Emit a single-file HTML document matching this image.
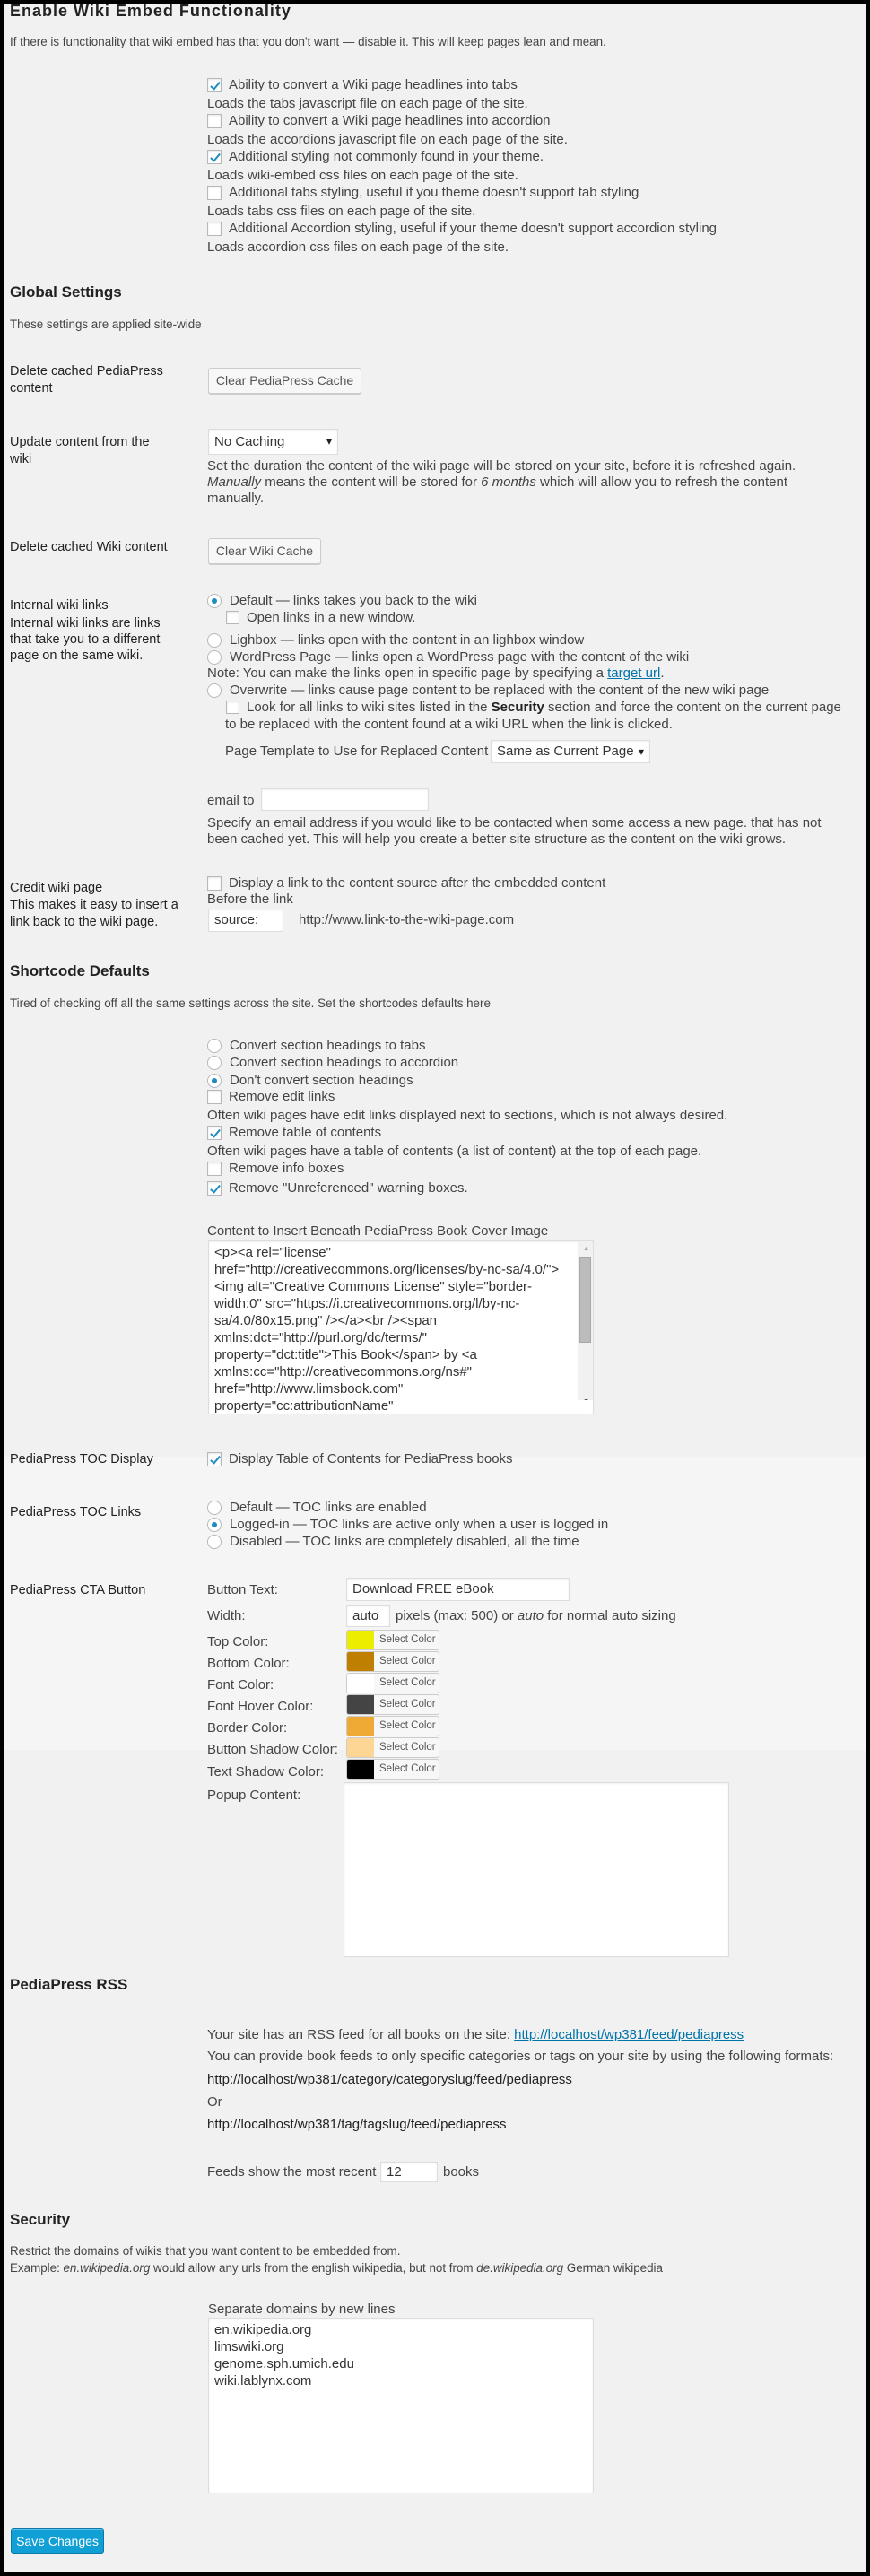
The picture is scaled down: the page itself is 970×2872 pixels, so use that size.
<!DOCTYPE html>
<html><head><meta charset="utf-8">
<style>
*{box-sizing:border-box;margin:0;padding:0}
body{width:970px;height:2872px;background:#000;position:relative;overflow:hidden;font-family:"Liberation Sans",sans-serif;}
#in{position:absolute;left:4px;top:5px;width:961px;height:2862px;background:#f1f1f1}
#lt{position:absolute;left:4px;top:1624px;width:961px;height:327px;background:#f5f5f5}
.t{position:absolute;white-space:nowrap;line-height:18px;font-size:15px;color:#444}
.s{font-size:13.4px}
.h{position:absolute;white-space:nowrap;font-size:17px;font-weight:bold;color:#222;line-height:20px;left:11px}
.l{position:absolute;white-space:nowrap;font-size:14.5px;color:#222;line-height:19px;left:11px}
.cb{position:absolute;width:16px;height:16px;background:#fff;border:1px solid #b4b9be;box-shadow:inset 0 1px 2px rgba(0,0,0,.1)}
.cb.on::after{content:"";position:absolute;left:5px;top:1px;width:4px;height:9px;border:solid #1e8cbe;border-width:0 2px 2px 0;transform:rotate(40deg)}
.rd{position:absolute;width:16px;height:16px;background:#fff;border:1px solid #b4b9be;border-radius:50%}
.rd.on::after{content:"";position:absolute;left:4px;top:4px;width:6px;height:6px;border-radius:50%;background:#1e8cbe}
.btn{position:absolute;background:#f7f7f7;border:1px solid #ccc;border-radius:3px;box-shadow:0 1px 0 #ccc;font-size:14px;color:#555;line-height:27px;text-align:center;white-space:nowrap}
.in{position:absolute;background:#fff;border:1px solid #ddd;box-shadow:inset 0 1px 2px rgba(0,0,0,.07);font-size:15px;color:#333;padding-left:6px;white-space:nowrap}
.sel::after{content:"▾";position:absolute;right:6px;top:0;font-size:12px;color:#222}
.sw{position:absolute;left:386px;width:104px;height:23px;border:1px solid #ccc;border-radius:3px;background:#f7f7f7;overflow:hidden}
.sw i{position:absolute;left:0;top:0;width:30px;height:21px}
.sw span{position:absolute;left:36px;top:4px;font-size:11.5px;color:#555}
a{color:#0073aa;text-decoration:underline}
</style></head><body>
<div id="in"></div><div id="lt"></div>

<div class="h" style="top:2px;font-size:18px;letter-spacing:1px">Enable Wiki Embed Functionality</div>
<div class="t s" style="left:11px;top:38px">If there is functionality that wiki embed has that you don't want — disable it. This will keep pages lean and mean.</div>

<div class="cb on" style="left:231px;top:87px"></div><div class="t" style="left:255px;top:86px">Ability to convert a Wiki page headlines into tabs</div>
<div class="t" style="left:231px;top:107px">Loads the tabs javascript file on each page of the site.</div>
<div class="cb" style="left:231px;top:127px"></div><div class="t" style="left:255px;top:126px">Ability to convert a Wiki page headlines into accordion</div>
<div class="t" style="left:231px;top:147px">Loads the accordions javascript file on each page of the site.</div>
<div class="cb on" style="left:231px;top:167px"></div><div class="t" style="left:255px;top:166px">Additional styling not commonly found in your theme.</div>
<div class="t" style="left:231px;top:187px">Loads wiki-embed css files on each page of the site.</div>
<div class="cb" style="left:231px;top:207px"></div><div class="t" style="left:255px;top:206px">Additional tabs styling, useful if you theme doesn't support tab styling</div>
<div class="t" style="left:231px;top:227px">Loads tabs css files on each page of the site.</div>
<div class="cb" style="left:231px;top:247px"></div><div class="t" style="left:255px;top:246px">Additional Accordion styling, useful if your theme doesn't support accordion styling</div>
<div class="t" style="left:231px;top:267px">Loads accordion css files on each page of the site.</div>

<div class="h" style="top:316px">Global Settings</div>
<div class="t s" style="left:11px;top:353px">These settings are applied site-wide</div>

<div class="l" style="top:405px">Delete cached PediaPress</div>
<div class="l" style="top:424px">content</div>
<div class="btn" style="left:232px;top:410px;width:171px;height:29px">Clear PediaPress Cache</div>

<div class="l" style="top:484px">Update content from the</div>
<div class="l" style="top:503px">wiki</div>
<div class="in sel" style="left:232px;top:478px;width:145px;height:29px;line-height:27px">No Caching</div>
<div class="t" style="left:231px;top:511px">Set the duration the content of the wiki page will be stored on your site, before it is refreshed again.</div>
<div class="t" style="left:231px;top:529px"><i>Manually</i> means the content will be stored for <i>6 months</i> which will allow you to refresh the content</div>
<div class="t" style="left:231px;top:547px">manually.</div>

<div class="l" style="top:601px">Delete cached Wiki content</div>
<div class="btn" style="left:232px;top:600px;width:126px;height:29px">Clear Wiki Cache</div>

<div class="l" style="top:666px">Internal wiki links</div>
<div class="l" style="top:686px">Internal wiki links are links</div>
<div class="l" style="top:704px">that take you to a different</div>
<div class="l" style="top:722px">page on the same wiki.</div>
<div class="rd on" style="left:231px;top:662px"></div><div class="t" style="left:256px;top:661px">Default — links takes you back to the wiki</div>
<div class="cb" style="left:252px;top:681px;width:15px;height:15px"></div><div class="t" style="left:275px;top:680px">Open links in a new window.</div>
<div class="rd" style="left:231px;top:706px"></div><div class="t" style="left:256px;top:705px">Lighbox — links open with the content in an lighbox window</div>
<div class="rd" style="left:231px;top:725px"></div><div class="t" style="left:256px;top:724px">WordPress Page — links open a WordPress page with the content of the wiki</div>
<div class="t" style="left:231px;top:742px">Note: You can make the links open in specific page by specifying a <a>target url</a>.</div>
<div class="rd" style="left:231px;top:762px"></div><div class="t" style="left:256px;top:761px">Overwrite — links cause page content to be replaced with the content of the new wiki page</div>
<div class="cb" style="left:252px;top:781px;width:15px;height:15px"></div><div class="t" style="left:275px;top:780px">Look for all links to wiki sites listed in the <b style="color:#222">Security</b> section and force the content on the current page</div>
<div class="t" style="left:251px;top:799px">to be replaced with the content found at a wiki URL when the link is clicked.</div>
<div class="t" style="left:251px;top:829px">Page Template to Use for Replaced Content</div>
<div class="in sel" style="left:547px;top:825px;width:178px;height:26px;line-height:24px">Same as Current Page</div>

<div class="t" style="left:231px;top:884px">email to</div>
<div class="in" style="left:291px;top:879px;width:187px;height:25px"></div>
<div class="t" style="left:231px;top:909px">Specify an email address if you would like to be contacted when some access a new page. that has not</div>
<div class="t" style="left:231px;top:927px">been cached yet. This will help you create a better site structure as the content on the wiki grows.</div>

<div class="l" style="top:981px">Credit wiki page</div>
<div class="l" style="top:1000px">This makes it easy to insert a</div>
<div class="l" style="top:1019px">link back to the wiki page.</div>
<div class="cb" style="left:231px;top:977px"></div><div class="t" style="left:255px;top:976px">Display a link to the content source after the embedded content</div>
<div class="t" style="left:231px;top:994px">Before the link</div>
<div class="in" style="left:232px;top:1013px;width:84px;height:26px;line-height:24px">source:</div>
<div class="t" style="left:333px;top:1017px">http://www.link-to-the-wiki-page.com</div>

<div class="h" style="top:1073px">Shortcode Defaults</div>
<div class="t s" style="left:11px;top:1110px">Tired of checking off all the same settings across the site. Set the shortcodes defaults here</div>

<div class="rd" style="left:231px;top:1158px"></div><div class="t" style="left:256px;top:1157px">Convert section headings to tabs</div>
<div class="rd" style="left:231px;top:1177px"></div><div class="t" style="left:256px;top:1176px">Convert section headings to accordion</div>
<div class="rd on" style="left:231px;top:1197px"></div><div class="t" style="left:256px;top:1196px">Don't convert section headings</div>
<div class="cb" style="left:231px;top:1215px"></div><div class="t" style="left:255px;top:1214px">Remove edit links</div>
<div class="t" style="left:231px;top:1235px">Often wiki pages have edit links displayed next to sections, which is not always desired.</div>
<div class="cb on" style="left:231px;top:1255px"></div><div class="t" style="left:255px;top:1254px">Remove table of contents</div>
<div class="t" style="left:231px;top:1275px">Often wiki pages have a table of contents (a list of content) at the top of each page.</div>
<div class="cb" style="left:231px;top:1295px"></div><div class="t" style="left:255px;top:1294px">Remove info boxes</div>
<div class="cb on" style="left:231px;top:1317px"></div><div class="t" style="left:255px;top:1316px">Remove "Unreferenced" warning boxes.</div>

<div class="t" style="left:231px;top:1364px">Content to Insert Beneath PediaPress Book Cover Image</div>
<div class="in" style="left:232px;top:1383px;width:430px;height:194px;padding:3px 0 0 6px;line-height:19px;white-space:normal;overflow:hidden">
&lt;p&gt;&lt;a rel="license"<br>href="http://creativecommons.org/licenses/by-nc-sa/4.0/"&gt;<br>&lt;img alt="Creative Commons License" style="border-<br>width:0" src="https://i.creativecommons.org/l/by-nc-<br>sa/4.0/80x15.png" /&gt;&lt;/a&gt;&lt;br /&gt;&lt;span<br>xmlns:dct="http://purl.org/dc/terms/"<br>property="dct:title"&gt;This Book&lt;/span&gt; by &lt;a<br>xmlns:cc="http://creativecommons.org/ns#"<br>href="http://www.limsbook.com"<br>property="cc:attributionName"
<div style="position:absolute;right:0;top:0;width:17px;height:100%;background:#f1f1f1"></div>
<div style="position:absolute;right:2px;top:17px;width:13px;height:96px;background:#bcbcbc;border:1px solid #a8a8a8"></div>
<div style="position:absolute;right:4px;top:5px;font-size:7px;color:#a3a3a3;line-height:8px">▲</div>
<div style="position:absolute;right:4px;top:175px;font-size:7px;color:#505050;line-height:8px">▼</div>
<div style="position:absolute;right:0;bottom:0;width:17px;height:15px;background:#fff"></div>
</div>

<div class="l" style="top:1618px">PediaPress TOC Display</div>
<div class="cb on" style="left:231px;top:1619px"></div><div class="t" style="left:255px;top:1618px">Display Table of Contents for PediaPress books</div>

<div class="l" style="top:1677px">PediaPress TOC Links</div>
<div class="rd" style="left:231px;top:1673px"></div><div class="t" style="left:256px;top:1672px">Default — TOC links are enabled</div>
<div class="rd on" style="left:231px;top:1692px"></div><div class="t" style="left:256px;top:1691px">Logged-in — TOC links are active only when a user is logged in</div>
<div class="rd" style="left:231px;top:1711px"></div><div class="t" style="left:256px;top:1710px">Disabled — TOC links are completely disabled, all the time</div>

<div class="l" style="top:1764px">PediaPress CTA Button</div>
<div class="t" style="left:231px;top:1764px">Button Text:</div>
<div class="in" style="left:386px;top:1759px;width:249px;height:26px;line-height:24px">Download FREE eBook</div>
<div class="t" style="left:231px;top:1793px">Width:</div>
<div class="in" style="left:386px;top:1789px;width:49px;height:25px;line-height:23px">auto</div>
<div class="t" style="left:441px;top:1793px">pixels (max: 500) or <i>auto</i> for normal auto sizing</div>

<div class="t" style="left:231px;top:1822px">Top Color:</div>
<div class="sw" style="top:1817px"><i style="background:#eded00"></i><span>Select Color</span></div>
<div class="t" style="left:231px;top:1846px">Bottom Color:</div>
<div class="sw" style="top:1841px"><i style="background:#bf7f00"></i><span>Select Color</span></div>
<div class="t" style="left:231px;top:1870px">Font Color:</div>
<div class="sw" style="top:1865px"><i style="background:#fff"></i><span>Select Color</span></div>
<div class="t" style="left:231px;top:1894px">Font Hover Color:</div>
<div class="sw" style="top:1889px"><i style="background:#444"></i><span>Select Color</span></div>
<div class="t" style="left:231px;top:1918px">Border Color:</div>
<div class="sw" style="top:1913px"><i style="background:#eeaa35"></i><span>Select Color</span></div>
<div class="t" style="left:231px;top:1942px">Button Shadow Color:</div>
<div class="sw" style="top:1937px"><i style="background:#fdd696"></i><span>Select Color</span></div>
<div class="t" style="left:231px;top:1967px">Text Shadow Color:</div>
<div class="sw" style="top:1961px"><i style="background:#000"></i><span>Select Color</span></div>
<div class="t" style="left:231px;top:1993px">Popup Content:</div>
<div class="in" style="left:383px;top:1987px;width:430px;height:195px"></div>

<div class="h" style="top:2203px">PediaPress RSS</div>
<div class="t" style="left:231px;top:2260px">Your site has an RSS feed for all books on the site: <a>http://localhost/wp381/feed/pediapress</a></div>
<div class="t" style="left:231px;top:2284px">You can provide book feeds to only specific categories or tags on your site by using the following formats:</div>
<div class="t" style="left:231px;top:2310px;color:#222">http://localhost/wp381/category/categoryslug/feed/pediapress</div>
<div class="t" style="left:231px;top:2335px">Or</div>
<div class="t" style="left:231px;top:2360px;color:#222">http://localhost/wp381/tag/tagslug/feed/pediapress</div>
<div class="t" style="left:231px;top:2413px">Feeds show the most recent</div>
<div class="in" style="left:424px;top:2410px;width:64px;height:23px;line-height:21px">12</div>
<div class="t" style="left:494px;top:2413px">books</div>

<div class="h" style="top:2465px">Security</div>
<div class="t s" style="left:11px;top:2501px">Restrict the domains of wikis that you want content to be embedded from.</div>
<div class="t s" style="left:11px;top:2520px">Example: <i>en.wikipedia.org</i> would allow any urls from the english wikipedia, but not from <i>de.wikipedia.org</i> German wikipedia</div>
<div class="t" style="left:232px;top:2566px">Separate domains by new lines</div>
<div class="in" style="left:232px;top:2584px;width:430px;height:196px;line-height:19px;padding-top:3px;white-space:normal">en.wikipedia.org<br>limswiki.org<br>genome.sph.umich.edu<br>wiki.lablynx.com</div>

<div style="position:absolute;left:12px;top:2819px;width:104px;height:28px;background:#10a0d6;border:1px solid #0a78a8;border-radius:3px;color:#fff;font-size:14px;line-height:26px;text-align:center;box-shadow:inset 0 1px 0 #5ac0e6">Save Changes</div>
</body></html>
